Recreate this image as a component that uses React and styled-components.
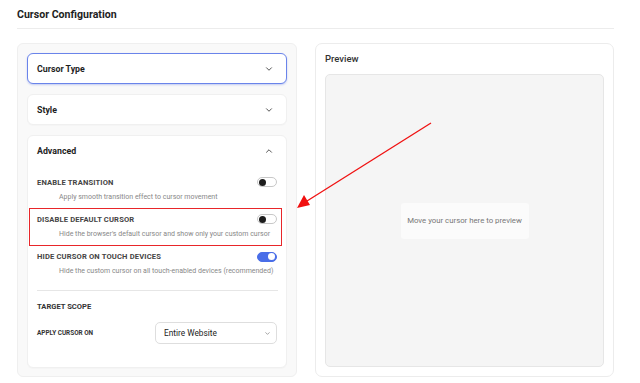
import React, { useState } from "react";
import styled, { createGlobalStyle } from "styled-components";
import { ChevronDown, ChevronUp } from "lucide-react";

const GlobalStyle = createGlobalStyle`
  body {
    margin: 0;
    font-family: Roboto, "Liberation Sans", sans-serif;
    background: #fff;
    color: #222;
  }
`;

//accordion card with a header and optional body
const Section = ({ title, open, focused, children }) => (
  <Card $focused={focused}>
    <CardHeader>
      <CardTitle>{title}</CardTitle>
      {open ? (
        <ChevronUp size={10} strokeWidth={2.2} color="#444" />
      ) : (
        <ChevronDown size={10} strokeWidth={2.2} color="#444" />
      )}
    </CardHeader>
    {open && <CardBody>{children}</CardBody>}
  </Card>
);

const Toggle = ({ on }) => (
  <Track $on={on}>
    <Knob $on={on} />
  </Track>
);

const SettingRow = ({ label, desc, on, highlight }) => (
  <Row $highlight={highlight}>
    <RowTop>
      <Label>{label}</Label>
      <Toggle on={on} />
    </RowTop>
    <Desc>{desc}</Desc>
  </Row>
);

const App = () => {
  const [scope] = useState("Entire Website");

  return (
    <>
      <GlobalStyle />
      <Page>
        <Header>Cursor Configuration</Header>
        <Columns>
          <LeftPanel>
            <Section title="Cursor Type" focused />
            <Section title="Style" />
            <Section title="Advanced" open>
              <SettingRow
                label="Enable Transition"
                desc="Apply smooth transition effect to cursor movement"
              />
              <SettingRow
                label="Disable Default Cursor"
                desc="Hide the browser's default cursor and show only your custom cursor"
                highlight
              />
              <SettingRow
                label="Hide Cursor on Touch Devices"
                desc="Hide the custom cursor on all touch-enabled devices (recommended)"
                on
              />
              <Divider />
              <ScopeTitle>Target Scope</ScopeTitle>
              <ScopeRow>
                <SmallLabel>Apply Cursor On</SmallLabel>
                <Select>
                  <span>{scope}</span>
                  <ChevronDown size={7} strokeWidth={2} color="#666" />
                </Select>
              </ScopeRow>
            </Section>
          </LeftPanel>
          <RightPanel>
            <PreviewTitle>Preview</PreviewTitle>
            <PreviewArea>
              <PreviewHint>Move your cursor here to preview</PreviewHint>
            </PreviewArea>
          </RightPanel>
        </Columns>
        <Arrow width="140" height="92" viewBox="0 0 140 92">
          <line x1="136" y1="2" x2="12" y2="80" stroke="#f01010" strokeWidth="1.3" />
          <polygon points="2,87 9,74 15,84" fill="#f01010" />
        </Arrow>
      </Page>
    </>
  );
};

export default App;

const Page = styled.div`
  position: relative;
  width: 597px;
  padding: 0 26px 6px 17px;
`;

const Header = styled.div`
  font-size: 10.6px;
  font-weight: 700;
  color: #1e1e1e;
  line-height: 14px;
  padding: 8px 0 6px;
  border-bottom: 1px solid #ececec;
`;

const Columns = styled.div`
  display: flex;
  gap: 18px;
  margin-top: 14px;
`;

const LeftPanel = styled.div`
  width: 260px;
  padding: 9px 9px 8px;
  background: #f9f9f9;
  border: 1px solid #efefef;
  border-radius: 6px;
  display: flex;
  flex-direction: column;
  gap: 10px;
`;

const Card = styled.div`
  background: #fff;
  border-radius: 6px;
  border: ${(p) => (p.$focused ? "1.5px solid #6a84ea" : "1px solid #f0f0f0")};
  box-shadow: ${(p) =>
    p.$focused ? "0 1px 2px rgba(70, 100, 230, 0.3)" : "0 1px 1px rgba(0,0,0,0.02)"};
`;

const CardHeader = styled.div`
  height: 29px;
  display: flex;
  align-items: center;
  justify-content: space-between;
  padding: 0 12px 0 9px;
`;

const CardTitle = styled.div`
  font-size: 8.8px;
  font-weight: 700;
  color: #1e1e1e;
`;

const CardBody = styled.div`
  padding: 6px 4px 23px 1px;
`;

const Row = styled.div`
  padding: 4.75px 4px 4.75px 7px;
  border: 1.5px solid ${(p) => (p.$highlight ? "#e8262a" : "transparent")};
  margin: -0.75px 0;
`;

const RowTop = styled.div`
  display: flex;
  align-items: center;
  justify-content: space-between;
  height: 12px;
`;

const Label = styled.div`
  font-size: 7.6px;
  font-weight: 700;
  color: #444;
  text-transform: uppercase;
  letter-spacing: 0.15px;
  white-space: nowrap;
`;

const Desc = styled.div`
  margin-top: 2.5px;
  padding-left: 22px;
  font-size: 7px;
  line-height: 12px;
  color: #888;
  white-space: nowrap;
`;

const Track = styled.div`
  width: 20px;
  height: 10px;
  box-sizing: border-box;
  border-radius: 6px;
  border: 1px solid ${(p) => (p.$on ? "#4a6ee8" : "#c8c8c8")};
  background: ${(p) => (p.$on ? "#4a6ee8" : "#fff")};
  display: flex;
  align-items: center;
  justify-content: ${(p) => (p.$on ? "flex-end" : "flex-start")};
  padding: 0 1px;
`;

const Knob = styled.div`
  width: 7px;
  height: 7px;
  border-radius: 50%;
  background: ${(p) => (p.$on ? "#fff" : "#1d1d1d")};
`;

const Divider = styled.div`
  height: 1px;
  background: #e6e6e6;
  margin: 8px 4px 10px 8px;
`;

const ScopeTitle = styled.div`
  font-size: 7.6px;
  font-weight: 700;
  color: #333;
  text-transform: uppercase;
  line-height: 12px;
  padding-left: 8px;
`;

const ScopeRow = styled.div`
  display: flex;
  align-items: center;
  justify-content: space-between;
  margin-top: 9px;
  padding: 0 5px 0 8px;
`;

const SmallLabel = styled.div`
  font-size: 6.4px;
  font-weight: 700;
  color: #333;
  text-transform: uppercase;
`;

const Select = styled.div`
  width: 122px;
  height: 22px;
  box-sizing: border-box;
  border: 1px solid #dedede;
  border-radius: 5px;
  display: flex;
  align-items: center;
  justify-content: space-between;
  padding: 0 5px 0 8px;
  font-size: 8.3px;
  color: #222;
`;

const RightPanel = styled.div`
  width: 279px;
  padding: 9px 9px 9px 9px;
  border: 1px solid #ececec;
  border-radius: 7px;
  display: flex;
  flex-direction: column;
`;

const PreviewTitle = styled.div`
  font-size: 9.5px;
  font-weight: 500;
  color: #333;
  line-height: 12px;
  margin-bottom: 9px;
`;

const PreviewArea = styled.div`
  flex: 1;
  background: #f5f5f5;
  border: 1px solid #e6e6e6;
  border-radius: 5px;
  display: flex;
  align-items: center;
  justify-content: center;
`;

const PreviewHint = styled.div`
  width: 128px;
  height: 36px;
  box-sizing: border-box;
  background: #fbfbfb;
  border-radius: 3px;
  display: flex;
  align-items: center;
  justify-content: center;
  font-size: 7.8px;
  color: #777;
`;

const Arrow = styled.svg`
  position: absolute;
  left: 295px;
  top: 121px;
  pointer-events: none;
`;
